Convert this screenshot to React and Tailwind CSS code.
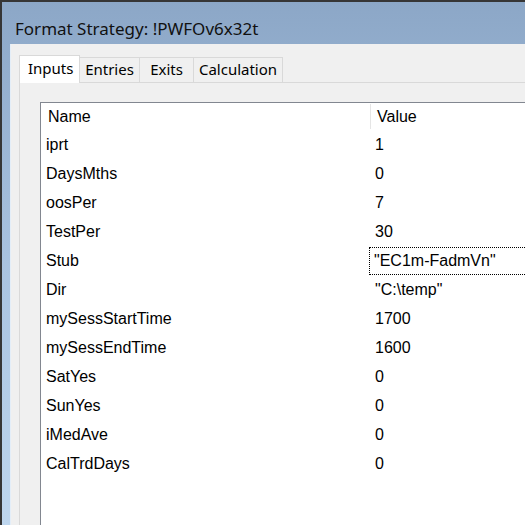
import React from 'react';

const rows = [
  ['iprt', '1'],
  ['DaysMths', '0'],
  ['oosPer', '7'],
  ['TestPer', '30'],
  ['Stub', '"EC1m-FadmVn"'],
  ['Dir', '"C:\\temp"'],
  ['mySessStartTime', '1700'],
  ['mySessEndTime', '1600'],
  ['SatYes', '0'],
  ['SunYes', '0'],
  ['iMedAve', '0'],
  ['CalTrdDays', '0'],
];

const tabs = [
  { label: 'Inputs', w: 'w-[61px]' },
  { label: 'Entries', w: 'w-[61px]' },
  { label: 'Exits', w: 'w-[55px]' },
  { label: 'Calculation', w: 'w-[90px]' },
];

export default function App() {
  return (
    <div className="w-[525px] h-[525px] overflow-hidden border-t-2 border-l-2 border-[#363636] bg-gradient-to-b from-[#8ca7c7] via-[#a9c3e0] to-[#bed6ee] flex flex-col">
      {/* Title bar */}
      <div className="h-[42px] shrink-0 flex items-center pl-[13px] pt-[12px] text-[17px] text-[#111] font-['Noto_Sans',sans-serif]">
        Format Strategy: !PWFOv6x32t
      </div>

      {/* Client area */}
      <div className="ml-[8px] flex-1 bg-[#f0f0f0] border-l border-[#e4eef8] flex flex-col min-h-0">
        {/* Tabs */}
        <div className="flex items-end pl-[8px] pt-[10px] h-[38px] shrink-0 font-['Noto_Sans',sans-serif] text-[15px] text-black">
          {tabs.map((t, i) =>
            i === 0 ? (
              <div
                key={t.label}
                className={`${t.w} h-[28px] -mb-px relative z-10 bg-white border border-b-0 border-[#d9d9d9] flex items-center pl-[8px] pb-[2px]`}
              >
                {t.label}
              </div>
            ) : (
              <div
                key={t.label}
                className={`${t.w} h-[25px] -ml-px bg-[#f0f0f0] border border-b-0 border-[#d9d9d9] flex items-center justify-center pb-[1px]`}
              >
                {t.label}
              </div>
            )
          )}
        </div>

        {/* Tab panel */}
        <div className="ml-[8px] flex-1 border-t border-l border-[#d9d9d9] bg-[#f0f0f0] pl-[20px] pt-[19px] min-h-0 flex flex-col">
          <div className="flex-1 bg-white border-t border-l border-[#828790] font-['Liberation_Sans',Arial,sans-serif] text-[16px] text-black">
            {/* Header */}
            <div className="flex h-[27px] items-center">
              <div className="w-[329px] pl-[7px]">Name</div>
              <div className="w-px h-[25px] bg-[#e5e5e5]" />
              <div className="pl-[6px]">Value</div>
            </div>
            {rows.map(([n, v]) => (
              <div key={n} className="flex h-[29px] items-center">
                <div className="w-[329px] pl-[5px]">{n}</div>
                {n === 'Stub' ? (
                  <div className="flex-1 h-[28px] border border-dotted border-r-0 border-black flex items-center pl-[4px] -ml-px">
                    {v}
                  </div>
                ) : (
                  <div className="pl-[5px]">{v}</div>
                )}
              </div>
            ))}
          </div>
        </div>
      </div>
    </div>
  );
}
